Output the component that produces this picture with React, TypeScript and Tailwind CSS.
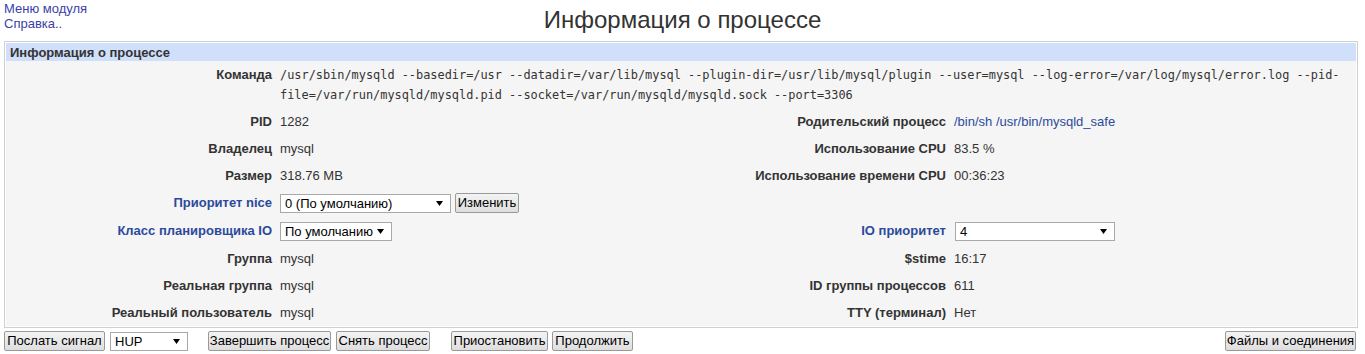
import React from "react";

const sans = "font-['Liberation_Sans',Arial,sans-serif]";

function Btn({ children, className = "" }: { children: React.ReactNode; className?: string }) {
  return (
    <button
      className={`h-[20px] px-0 text-center text-[13px] leading-[18px] text-black border border-[#999] rounded-[2px] bg-gradient-to-b from-[#f4f4f4] to-[#dedede] whitespace-nowrap overflow-visible ${className}`}
    >
      {children}
    </button>
  );
}

function Select({ value, width }: { value: string; width: string }) {
  return (
    <div
      className={`${width} h-[19px] flex items-center justify-between pl-[4px] pr-[7px] bg-white border border-[#a9a9a9] text-[13px] text-black leading-[17px]`}
    >
      <span className="whitespace-nowrap">{value}</span>
      <svg width="7" height="5" viewBox="0 0 7 5" className="shrink-0">
        <path d="M0 0h7L3.5 5z" fill="#000" />
      </svg>
    </div>
  );
}

function Label({ children, link = false }: { children: React.ReactNode; link?: boolean }) {
  return (
    <div
      className={`flex items-center justify-end pr-[4px] font-bold whitespace-nowrap ${
        link ? "text-[#2b4a9c]" : "text-[#333]"
      }`}
    >
      {children}
    </div>
  );
}

function Value({ children }: { children?: React.ReactNode }) {
  return <div className="h-[27px] flex items-center pl-[4px] text-[#333] whitespace-nowrap">{children}</div>;
}

const rows: [string, string, string, string, boolean?][] = [
  ["PID", "1282", "Родительский процесс", "/bin/sh /usr/bin/mysqld_safe", true],
  ["Владелец", "mysql", "Использование CPU", "83.5 %"],
  ["Размер", "318.76 MB", "Использование времени CPU", "00:36:23"],
];

const rows2: [string, string, string, string][] = [
  ["Группа", "mysql", "$stime", "16:17"],
  ["Реальная группа", "mysql", "ID группы процессов", "611"],
  ["Реальный пользователь", "mysql", "TTY (терминал)", "Нет"],
];

export default function App() {
  return (
    <div className={`${sans} text-[13px] bg-white w-[1365px] h-[354px] overflow-hidden`}>
      {/* шапка */}
      <div className="grid grid-cols-[1fr_auto_1fr] h-[41px]">
        <div className="pl-[4px] pt-[1px] text-[13px] leading-[15px] text-[#3a3fa8]">
          <div>Меню модуля</div>
          <div>Справка..</div>
        </div>
        <h1 className="pt-[6px] text-[24px] leading-[28px] text-[#333] font-normal">Информация о процессе</h1>
        <div />
      </div>

      {/* таблица */}
      <div className="ml-[4px] mr-[7px] border border-[#cfcfcf] p-[1px] bg-white">
        <div className="h-[18px] bg-[#d0dffa] pl-[4px] font-bold text-[#333] leading-[19px]">
          Информация о процессе
        </div>
        <div className="bg-[#f5f5f5] grid grid-cols-[270px_400px_274px_1fr]">
          <div className="flex justify-end pr-[4px] pt-[4px] pb-[3px] font-bold text-[#333] leading-[20px]">
            Команда
          </div>
          <div className="col-span-3 pl-[4px] pt-[4px] pb-[3px] font-['DejaVu_Sans_Mono',monospace] text-[11.9px] leading-[20px] text-[#333] whitespace-nowrap">
            /usr/sbin/mysqld --basedir=/usr --datadir=/var/lib/mysql --plugin-dir=/usr/lib/mysql/plugin --user=mysql --log-error=/var/log/mysql/error.log --pid-
            <br />
            file=/var/run/mysqld/mysqld.pid --socket=/var/run/mysqld/mysqld.sock --port=3306
          </div>

          {rows.map(([l1, v1, l2, v2, link]) => (
            <React.Fragment key={l1}>
              <Label>{l1}</Label>
              <Value>{v1}</Value>
              <Label>{l2}</Label>
              <Value>{link ? <span className="text-[#2b4a9c]">{v2}</span> : v2}</Value>
            </React.Fragment>
          ))}

          <Label link>Приоритет nice</Label>
          <div className="h-[28px] flex items-center gap-[4px] pl-[4px]">
            <Select value="0 (По умолчанию)" width="w-[171px]" />
            <Btn className="w-[64px]">Изменить</Btn>
          </div>
          <div />
          <div />

          <Label link>Класс планировщика IO</Label>
          <div className="h-[28px] flex items-center pl-[4px]">
            <Select value="По умолчанию" width="w-[112px]" />
          </div>
          <Label link>IO приоритет</Label>
          <div className="h-[28px] flex items-center pl-[5px]">
            <Select value="4" width="w-[160px]" />
          </div>

          {rows2.map(([l1, v1, l2, v2]) => (
            <React.Fragment key={l1}>
              <Label>{l1}</Label>
              <Value>{v1}</Value>
              <Label>{l2}</Label>
              <Value>{v2}</Value>
            </React.Fragment>
          ))}
        </div>
      </div>

      {/* кнопки */}
      <div className="flex items-center mt-[3px] pl-[4px] pr-[9px]">
        <Btn className="w-[101px]">Послать сигнал</Btn>
        <div className="ml-[5px]">
          <Select value="HUP" width="w-[78px]" />
        </div>
        <Btn className="ml-[20px] w-[123px]">Завершить процесс</Btn>
        <Btn className="ml-[5px] w-[94px]">Снять процесс</Btn>
        <Btn className="ml-[21px] w-[97px]">Приостановить</Btn>
        <Btn className="ml-[4px] w-[81px]">Продолжить</Btn>
        <Btn className="ml-auto w-[131px]">Файлы и соединения</Btn>
      </div>
    </div>
  );
}
